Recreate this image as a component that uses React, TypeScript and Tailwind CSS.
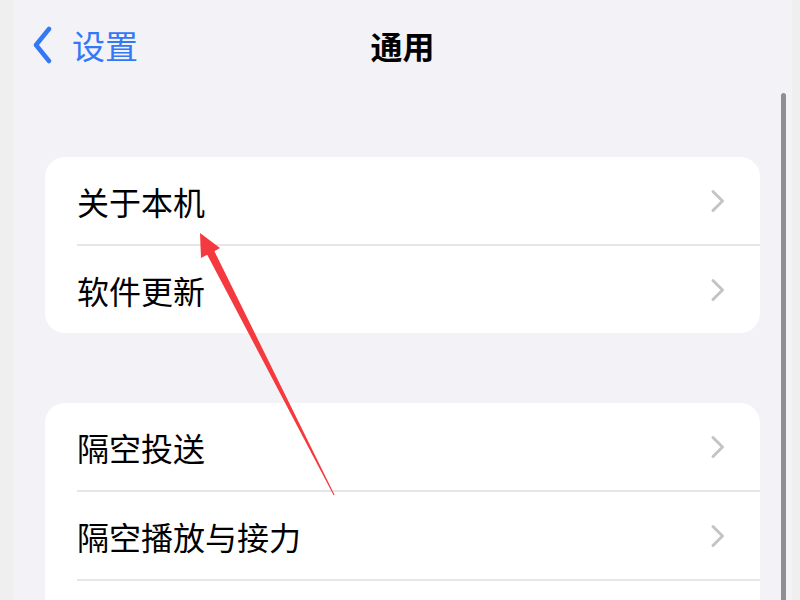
import React from 'react';

const font = { fontFamily: '"Noto Sans CJK SC", "Noto Sans", sans-serif' };

function Chevron() {
  return (
    <svg width="16" height="24" viewBox="0 0 16 24" className="shrink-0">
      <path d="M3 2.5 L12.5 12 L3 21.5" fill="none" stroke="#c4c4c7" strokeWidth="3" strokeLinecap="round" strokeLinejoin="round" />
    </svg>
  );
}

function Row({ label, last }: { label?: string; last?: boolean }) {
  return (
    <div className="shrink-0 pl-8 flex flex-col">
      <div className="h-[87px] flex items-center justify-between pr-[34px]">
        {label && (
          <>
            <span className="text-[32px] leading-none text-black">{label}</span>
            <Chevron />
          </>
        )}
      </div>
      {!last && <div className="h-[2px] shrink-0 bg-[#e6e6e9]" />}
    </div>
  );
}

export default function App() {
  return (
    <div className="w-[800px] h-[600px] overflow-hidden flex relative bg-[#f2f2f7]" style={font}>
      <div className="w-[13px] bg-[#efeff0]" />
      <div className="flex-1 flex flex-col">
        {/* Nav bar */}
        <div className="h-[88px] shrink-0 relative flex items-center">
          <div className="flex items-center pl-[19px] pt-[2px]">
            <svg width="22" height="38" viewBox="0 0 22 38">
              <path d="M17 3 L4 19 L17 35" fill="none" stroke="#3478f6" strokeWidth="4.5" strokeLinecap="round" strokeLinejoin="round" />
            </svg>
            <span className="ml-[18px] text-[33px] leading-none text-[#3478f6]">设置</span>
          </div>
          <div className="absolute inset-x-0 flex justify-center pt-[2px]">
            <span className="text-[32px] leading-none font-bold text-black">通用</span>
          </div>
        </div>

        <div className="mt-[69px] mx-8 shrink-0 bg-white rounded-[20px] overflow-hidden flex flex-col">
          <Row label="关于本机" />
          <Row label="软件更新" last />
        </div>

        <div className="mt-[70px] mx-8 shrink-0 bg-white rounded-[20px] overflow-hidden flex flex-col">
          <Row label="隔空投送" />
          <Row label="隔空播放与接力" />
          <Row last />
        </div>
      </div>
      <div className="w-[8px] bg-[#efeff0]" />

      {/* scroll indicator */}
      <div className="absolute left-[781px] top-[93px] w-[5px] h-[520px] rounded-full bg-[#8e8e93]" />

      {/* annotation arrow */}
      <svg className="absolute inset-0 pointer-events-none" width="800" height="600" viewBox="0 0 800 600">
        <polygon
          points="200,233 220,248 214.4,251.2 334.5,494.8 333.6,495.2 207.2,254.8 201,258"
          fill="#f53a3f"
        />
      </svg>
    </div>
  );
}
